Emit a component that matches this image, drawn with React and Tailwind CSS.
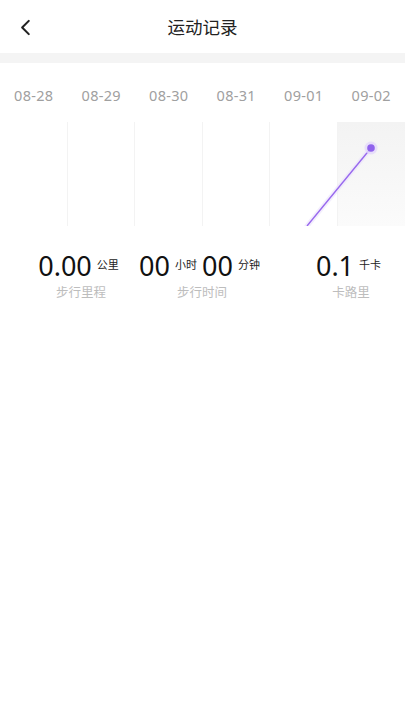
import React from 'react';

const DATES = ['08-28', '08-29', '08-30', '08-31', '09-01', '09-02'];

function BackIcon({ className = '' }) {
  return (
    <svg viewBox="0 0 12 18" className={className} fill="none" aria-hidden="true">
      <path d="M10 2L3 9l7 7" stroke="currentColor" strokeWidth="2.2" strokeLinecap="round" strokeLinejoin="round" />
    </svg>
  );
}

function Stat({ children, label, className = '' }) {
  return (
    <div className={`flex flex-col items-center ${className}`}>
      <div className="flex items-center whitespace-nowrap">{children}</div>
      <div className="mt-[4px] text-[12.5px] leading-[16px] text-[#bdbdbd]">{label}</div>
    </div>
  );
}

function Num({ value }) {
  return <span className="text-[27px] leading-[30px] text-[#111]">{value}</span>;
}

function Unit({ value }) {
  return <span className="mx-[5px] -mt-[3px] text-[11px] leading-[12px] text-[#222]">{value}</span>;
}

export default function App() {
  return (
    <div className="min-h-[720px] w-[405px] bg-white font-['Noto_Sans','Noto_Sans_CJK_SC',sans-serif]">
      <header className="relative flex h-[53px] items-center justify-center">
        <button type="button" className="absolute left-[19px] top-[19px] text-[#222]" aria-label="back">
          <BackIcon className="h-[17px] w-[12px]" />
        </button>
        <h1 className="pt-[2px] text-[17.5px] text-[#222]">运动记录</h1>
      </header>
      <div className="h-[10px] bg-[#f4f4f4]" />

      <div className="grid grid-cols-6 pt-[22px]">
        {DATES.map((d) => (
          <div key={d} className="text-center text-[14.5px] leading-[20px] tracking-[0.3px] text-[#a0a0a0]">
            {d}
          </div>
        ))}
      </div>

      <div className="relative mt-[17px] grid h-[104px] grid-cols-6">
        {DATES.map((d, i) => (
          <div
            key={d}
            className={
              i === 5
                ? 'bg-gradient-to-b from-[#f3f3f3] to-[#fbfbfb]'
                : 'border-r border-[#f3f3f3]'
            }
          />
        ))}
        <svg className="absolute inset-0 h-[104px] w-[405px]" viewBox="0 0 405 104" fill="none">
          <path d="M307 104 L371 26" stroke="#ebe2fc" strokeWidth="5" strokeLinecap="round" opacity="0.6" />
          <path d="M307 104 L371 26" stroke="#9868ee" strokeWidth="1.4" />
          <circle cx="371" cy="26" r="6.5" fill="#e4d8fb" opacity="0.8" />
          <circle cx="371" cy="26" r="3.8" fill="#9063ec" />
        </svg>
      </div>

      <div className="flex pl-[20px] pt-[25px]">
        <Stat label="步行里程" className="w-[122px]">
          <Num value="0.00" />
          <Unit value="公里" />
        </Stat>
        <Stat label="步行时间" className="w-[120px]">
          <Num value="00" />
          <Unit value="小时" />
          <Num value="00" />
          <Unit value="分钟" />
        </Stat>
        <Stat label="卡路里" className="ml-[38px] w-[102px]">
          <Num value="0.1" />
          <Unit value="千卡" />
        </Stat>
      </div>
    </div>
  );
}
